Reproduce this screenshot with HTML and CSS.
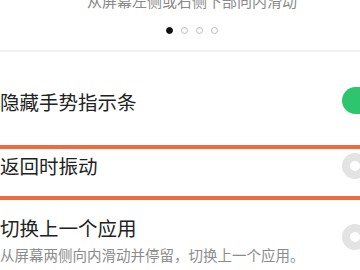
FILE: index.html
```html
<!DOCTYPE html>
<html lang="zh">
<head>
<meta charset="utf-8">
<link rel="stylesheet" href="styles.css">
</head>
<body>
<div class="page">
  <div class="intro">
    <p class="intro-text">从屏幕左侧或右侧下部向内滑动</p>
    <div class="dots">
      <span class="dot active"></span>
      <span class="dot"></span>
      <span class="dot"></span>
      <span class="dot"></span>
    </div>
  </div>
  <div class="divider"></div>
  <div class="list">
    <div class="row row-first">
      <div class="row-text"><div class="title">隐藏手势指示条</div></div>
      <span class="switch on"></span>
    </div>
    <div class="row">
      <div class="row-text"><div class="title">返回时振动</div></div>
      <span class="switch off"></span>
    </div>
    <div class="row row-two">
      <div class="row-text">
        <div class="title">切换上一个应用</div>
        <div class="subtitle">从屏幕两侧向内滑动并停留，切换上一个应用。</div>
      </div>
      <span class="switch off"></span>
    </div>
    <div class="highlight"></div>
  </div>
</div>
</body>
</html>
```
FILE: styles.css
```css
html, body {
  margin: 0;
  padding: 0;
  background: #ffffff;
}
body {
  width: 360px;
  height: 270px;
  overflow: hidden;
  font-family: "Noto Sans CJK SC", "Noto Sans", sans-serif;
}
.page {
  width: 360px;
}
.intro {
  padding-left: 24px;
  display: flex;
  flex-direction: column;
  align-items: center;
}
.intro-text {
  margin: -9px 0 0 0;
  font-size: 15px;
  line-height: 20px;
  color: #8a8a8a;
  white-space: nowrap;
}
.dots {
  display: flex;
  gap: 8px;
  margin-top: 16px;
  margin-left: -1px;
}
.dot {
  width: 7px;
  height: 7px;
  box-sizing: border-box;
  border-radius: 50%;
  border: 1px solid #bdbdbd;
}
.dot.active {
  background: #111;
  border-color: #111;
}
.divider {
  height: 2px;
  background: #f0f0f0;
  margin-top: 16px;
}
.list {
  position: relative;
}
.row {
  height: 64px;
  display: flex;
  align-items: center;
  justify-content: space-between;
}
.row-first {
  margin-top: 18px;
}
.row-two {
  height: 71px;
  align-items: flex-start;
  padding-top: 17px;
  box-sizing: border-box;
}
.row-text {
  display: flex;
  flex-direction: column;
  gap: 4px;
}
.title {
  font-size: 19.5px;
  line-height: 26px;
  color: #222;
  white-space: nowrap;
}
.subtitle {
  font-size: 14.5px;
  line-height: 20px;
  color: #8c8c8c;
  white-space: nowrap;
}
.switch {
  flex: none;
  margin-right: -28px;
}
.switch.on {
  width: 52px;
  height: 27px;
  border-radius: 14px;
  background: #2ec56f;
  margin-top: -4px;
  margin-right: -34px;
}
.switch.off {
  width: 26px;
  height: 26px;
  box-sizing: border-box;
  border-radius: 50%;
  border: 8px solid #e3e3e3;
  background: #fff;
  filter: blur(0.6px);
  margin-right: -8px;
}
.row-two .switch.off {
  margin-top: 9px;
}
.highlight {
  position: absolute;
  left: -10px;
  right: -10px;
  top: 75px;
  height: 55px;
  box-sizing: border-box;
  border-top: 4px solid #ef6a3c;
  border-bottom: 4px solid #ef6a3c;
}
```
